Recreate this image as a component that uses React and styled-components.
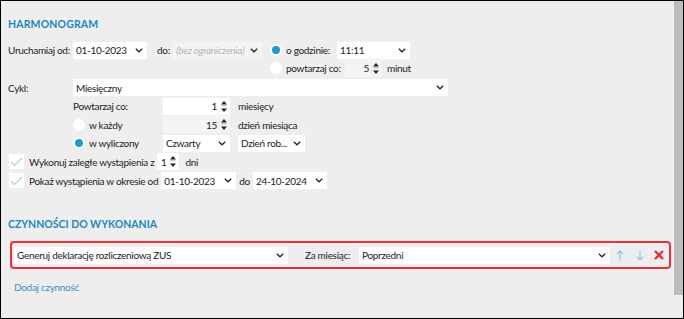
import React from "react";
import styled, { createGlobalStyle } from "styled-components";

const Global = createGlobalStyle`
    html, body {
        margin: 0;
        padding: 0;
        background: #fff;
    }
    * {
        box-sizing: border-box;
    }
`

const Frame = styled.div`
    width: 684px;
    height: 319px;
    border: 1px solid #000;
    background: #eeeeee;
    display: flex;
    font-family: Lato, "Open Sans", sans-serif;
    font-size: 10px;
    letter-spacing: -0.3px;
    color: #222;
    overflow: hidden;
`

const Content = styled.div`
    flex: 1;
    padding: 16px 0 0 7px;
`

const Scrollbar = styled.div`
    width: 9px;
    display: flex;
    flex-direction: column;
    div {
        height: 294px;
        background: #bdbdbd;
    }
`

const Title = styled.h2`
    margin: 0;
    height: 14px;
    line-height: 14px;
    font-size: 10.5px;
    font-weight: bold;
    color: #1b86c2;
    letter-spacing: ${p => p.$ls || 0}px;
    margin-top: ${p => p.$top || 0}px;
`

const Row = styled.div`
    display: flex;
    align-items: ${p => (p.$top_align ? "flex-start" : "center")};
    height: ${p => p.$h || 19}px;
    padding-left: ${p => p.$indent || 0}px;
    margin-top: ${p => p.$top || 0}px;
`

const Label = styled.span`
    width: ${p => (p.$w ? p.$w + "px" : "auto")};
    margin-left: ${p => p.$ml || 0}px;
    margin-right: ${p => p.$mr || 0}px;
    white-space: nowrap;
    flex-shrink: 0;
`

const SelectBox = styled.div`
    width: ${p => p.$w}px;
    height: 17px;
    margin-left: ${p => p.$ml || 0}px;
    background: ${p => (p.$disabled ? "#f4f4f4" : "#fff")};
    color: ${p => (p.$disabled ? "#b5b5b5" : "#222")};
    font-style: ${p => (p.$disabled ? "italic" : "normal")};
    display: flex;
    align-items: center;
    padding: 0 4px 0 3px;
    flex-shrink: 0;
    span {
        flex: 1;
        white-space: nowrap;
        overflow: hidden;
    }
`

const Spin = styled.div`
    width: ${p => p.$w}px;
    height: 17px;
    margin-left: ${p => p.$ml || 0}px;
    background: ${p => (p.$disabled ? "#f4f4f4" : "#fff")};
    display: flex;
    align-items: center;
    justify-content: flex-end;
    padding-right: 3px;
    flex-shrink: 0;
    span {
        margin-right: 4px;
    }
`

const Radio = styled.span`
    width: 12px;
    height: 12px;
    border-radius: 50%;
    background: #fff;
    display: flex;
    align-items: center;
    justify-content: center;
    margin-left: ${p => p.$ml || 0}px;
    margin-right: 4px;
    flex-shrink: 0;
    &::after {
        content: "";
        width: 8px;
        height: 8px;
        border-radius: 50%;
        background: ${p => (p.$on ? "#1d9ad8" : "transparent")};
    }
`

const Check = styled.span`
    width: 15px;
    height: 15px;
    background: #fff;
    margin-left: 1px;
    margin-right: 5px;
    display: flex;
    align-items: center;
    justify-content: center;
    flex-shrink: 0;
`

const Group = styled.div`
    display: flex;
    flex-direction: column;
    margin-left: ${p => p.$ml || 0}px;
`

const ActionRow = styled.div`
    margin: 10px 0 0 2px;
    width: 661px;
    height: 28px;
    border: 2px solid #ec3238;
    border-radius: 4px;
    display: flex;
    align-items: center;
    padding-left: 2px;
`

const IconBtn = styled.span`
    width: 20px;
    display: flex;
    justify-content: center;
`

const Link = styled.a`
    display: block;
    margin: 11px 0 0 6px;
    color: #3a8fcc;
    text-decoration: none;
    line-height: 14px;
`

const Chevron = () => (
    <svg width="8" height="5" viewBox="0 0 8 5">
        <path d="M0.8 0.8 L4 3.8 L7.2 0.8" fill="none" stroke="#222" strokeWidth="1.3" />
    </svg>
)

const Arrows = () => (
    <svg width="6" height="13" viewBox="0 0 6 13">
        <path d="M3 1 L6 4.5 H0 Z" fill="#222" />
        <path d="M3 12 L6 8.5 H0 Z" fill="#222" />
        <rect x="0.5" y="5.6" width="5" height="0.6" fill="#888" />
    </svg>
)

const Tick = () => (
    <svg width="13" height="10" viewBox="0 0 13 10">
        <path d="M1 5 L4.5 8.5 L12 1" fill="none" stroke="#a9d3ee" strokeWidth="1.3" />
    </svg>
)

function Select({ w, ml, value, disabled }) {
    return (
        <SelectBox $w={w} $ml={ml} $disabled={disabled}>
            <span>{value}</span>
            <Chevron />
        </SelectBox>
    )
}

function Spinner({ w, ml, value, disabled }) {
    return (
        <Spin $w={w} $ml={ml} $disabled={disabled}>
            <span>{value}</span>
            <Arrows />
        </Spin>
    )
}

export default function App() {
    return (
        <>
            <Global />
            <Frame>
                <Content>
                    <Title $ls={0.15}>HARMONOGRAM</Title>
                    <Row $top={10} $h={36} $top_align>
                        <Row $h={18}>
                            <Label $w={65}>Uruchamiaj od:</Label>
                            <Select w={74} value="01-10-2023" />
                            <Label $w={16} $ml={10}>do:</Label>
                            <Select w={89} value="(bez ograniczenia)" disabled />
                        </Row>
                        <Group $ml={8}>
                            <Row $h={18}>
                                <Radio $on />
                                <Label $w={51}>o godzinie:</Label>
                                <Select w={73} value="11:11" />
                            </Row>
                            <Row $h={18}>
                                <Radio />
                                <Label $w={59}>powtarzaj co:</Label>
                                <Spinner w={37} value="5" disabled />
                                <Label $ml={5}>minut</Label>
                            </Row>
                        </Group>
                    </Row>
                    <Row $top={1}>
                        <Label $w={65}>Cykl:</Label>
                        <Select w={375} value="Miesięczny" />
                    </Row>
                    <Row $indent={65} $h={18}>
                        <Label $w={90}>Powtarzaj co:</Label>
                        <Spinner w={67} value="1" />
                        <Label $ml={8}>miesięcy</Label>
                    </Row>
                    <Row $indent={65}>
                        <Radio />
                        <Label $w={74}>w każdy</Label>
                        <Spinner w={67} value="15" disabled />
                        <Label $ml={8}>dzień miesiąca</Label>
                    </Row>
                    <Row $indent={65} $h={18}>
                        <Radio $on />
                        <Label $w={74}>w wyliczony</Label>
                        <Select w={67} value="Czwarty" />
                        <Select w={67} ml={8} value="Dzień rob..." />
                    </Row>
                    <Row>
                        <Check><Tick /></Check>
                        <Label $mr={3}>Wykonuj zaległe wystąpienia z</Label>
                        <Spinner w={22} value="1" />
                        <Label $ml={6}>dni</Label>
                    </Row>
                    <Row>
                        <Check><Tick /></Check>
                        <Label $mr={3}>Pokaż wystąpienia w okresie od</Label>
                        <Select w={75} value="01-10-2023" />
                        <Label $ml={3} $mr={3}>do</Label>
                        <Select w={74} value="24-10-2024" />
                    </Row>
                    <Title $top={27}>CZYNNOŚCI DO WYKONANIA</Title>
                    <ActionRow>
                        <Select w={274} value="Generuj deklarację rozliczeniową ZUS" />
                        <Label $w={54} $ml={17}>Za miesiąc:</Label>
                        <Select w={251} value="Poprzedni" />
                        <IconBtn>
                            <svg width="8" height="11" viewBox="0 0 8 11">
                                <path d="M4 10.5 V1 M0.8 4.2 L4 1 L7.2 4.2" fill="none" stroke="#8cc6ea" strokeWidth="1.2" />
                            </svg>
                        </IconBtn>
                        <IconBtn>
                            <svg width="8" height="11" viewBox="0 0 8 11">
                                <path d="M4 0.5 V10 M0.8 6.8 L4 10 L7.2 6.8" fill="none" stroke="#8cc6ea" strokeWidth="1.2" />
                            </svg>
                        </IconBtn>
                        <IconBtn>
                            <svg width="10" height="10" viewBox="0 0 10 10">
                                <path d="M1 1 L9 9 M9 1 L1 9" fill="none" stroke="#e8262d" strokeWidth="2.2" />
                            </svg>
                        </IconBtn>
                    </ActionRow>
                    <Link href="#">Dodaj czynność</Link>
                </Content>
                <Scrollbar><div /></Scrollbar>
            </Frame>
        </>
    )
}
